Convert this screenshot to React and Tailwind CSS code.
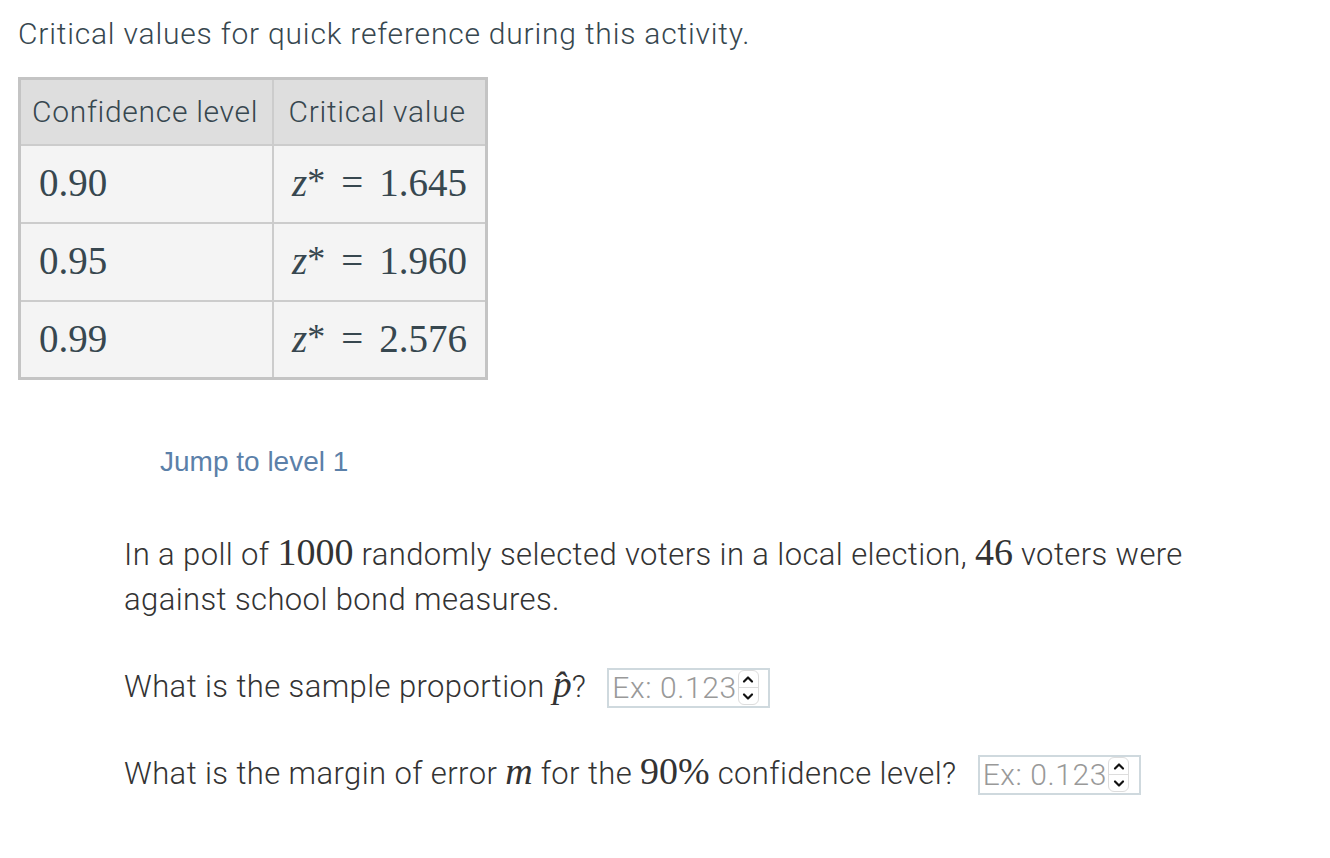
import React from "react";

const serif = { fontFamily: '"Liberation Serif", "DejaVu Serif", serif' };

function Spinner() {
  return (
    <span className="ml-[1px] flex h-[35px] w-[21px] flex-col overflow-hidden rounded-[6px] border border-[#dddddd] bg-white">
      <span className="flex flex-1 items-center justify-center border-b border-[#dddddd]">
        <svg width="12" height="9" viewBox="0 0 12 9" fill="none" stroke="#111" strokeWidth="2.2" strokeLinecap="round" strokeLinejoin="round">
          <path d="M2 6.5 L6 2.5 L10 6.5" />
        </svg>
      </span>
      <span className="flex flex-1 items-center justify-center">
        <svg width="12" height="9" viewBox="0 0 12 9" fill="none" stroke="#111" strokeWidth="2.2" strokeLinecap="round" strokeLinejoin="round">
          <path d="M2 2.5 L6 6.5 L10 2.5" />
        </svg>
      </span>
    </span>
  );
}

function NumInput() {
  return (
    <span className="inline-flex h-[40px] w-[163px] items-center border-2 border-[#cfd9de] bg-white pl-[3px] align-middle">
      <span className="text-[30px] font-light leading-none tracking-[0.6px] text-[#999999]">Ex: 0.123</span>
      <Spinner />
    </span>
  );
}

function Z({ v }) {
  return (
    <span style={serif} className="whitespace-nowrap text-[39px] text-[#37474f]">
      <span className="italic">z</span>
      <span className="relative top-[-3px] text-[36px]">*</span>
      <span className="mx-[16px]">=</span>
      {v}
    </span>
  );
}

const head = "whitespace-nowrap border-2 border-[#cccccc] text-left text-[30px] font-light tracking-[0.7px] text-[#37474f]";

export default function App() {
  const rows = [
    ["0.90", "1.645"],
    ["0.95", "1.960"],
    ["0.99", "2.576"],
  ];
  return (
    <div className="min-h-[858px] bg-white" style={{ fontFamily: 'Roboto, "Noto Sans", sans-serif' }}>
      <div className="pl-[18px] pt-[14px]">
        <p className="text-[30px] font-light leading-[40px] tracking-[0.8px] text-[#37474f]">
          Critical values for quick reference during this activity.
        </p>
        <table className="mt-[23px] border-collapse border-[3px] border-[#c4c4c4]">
          <thead>
            <tr className="h-[66px] bg-[#dedede]">
              <th className={"w-[253px] px-[11px] " + head}>Confidence level</th>
              <th className={"w-[214px] px-[15px] " + head}>Critical value</th>
            </tr>
          </thead>
          <tbody>
            {rows.map(([a, b]) => (
              <tr key={a} className="h-[78px] bg-[#f4f4f4]">
                <td className="border-2 border-[#cccccc] px-[18px]">
                  <span style={serif} className="text-[39px] text-[#37474f]">{a}</span>
                </td>
                <td className="border-2 border-[#cccccc] pr-[18px] text-right">
                  <Z v={b} />
                </td>
              </tr>
            ))}
          </tbody>
        </table>
      </div>

      <div className="mt-[61px] pl-[160px]">
        <span className="text-[28px] text-[#5b80a9]" style={{ fontFamily: '"Liberation Sans", Arial, sans-serif' }}>
          Jump to level 1
        </span>
      </div>

      <div className="mt-[47px] pl-[124px] pr-[100px] text-[31px] font-light leading-[45px] tracking-[0.4px] text-[#333333]">
        <p>
          In a poll of <span style={serif} className="text-[38px] tracking-normal">1000</span> randomly selected voters in a local election,{" "}
          <span style={serif} className="text-[38px] tracking-normal">46</span> voters were
          <br />
          against school bond measures.
        </p>
        <div className="mt-[40px] flex items-center">
          <span>
            What is the sample proportion{" "}
            <span style={serif} className="text-[38px] italic tracking-normal">p̂</span>?
          </span>
          <span className="ml-[21px]"><NumInput /></span>
        </div>
        <div className="mt-[40px] flex items-center">
          <span>
            What is the margin of error <span style={serif} className="text-[38px] italic tracking-normal">m</span> for the{" "}
            <span style={serif} className="text-[38px] tracking-normal">90%</span> confidence level?
          </span>
          <span className="ml-[21px]"><NumInput /></span>
        </div>
      </div>
    </div>
  );
}
